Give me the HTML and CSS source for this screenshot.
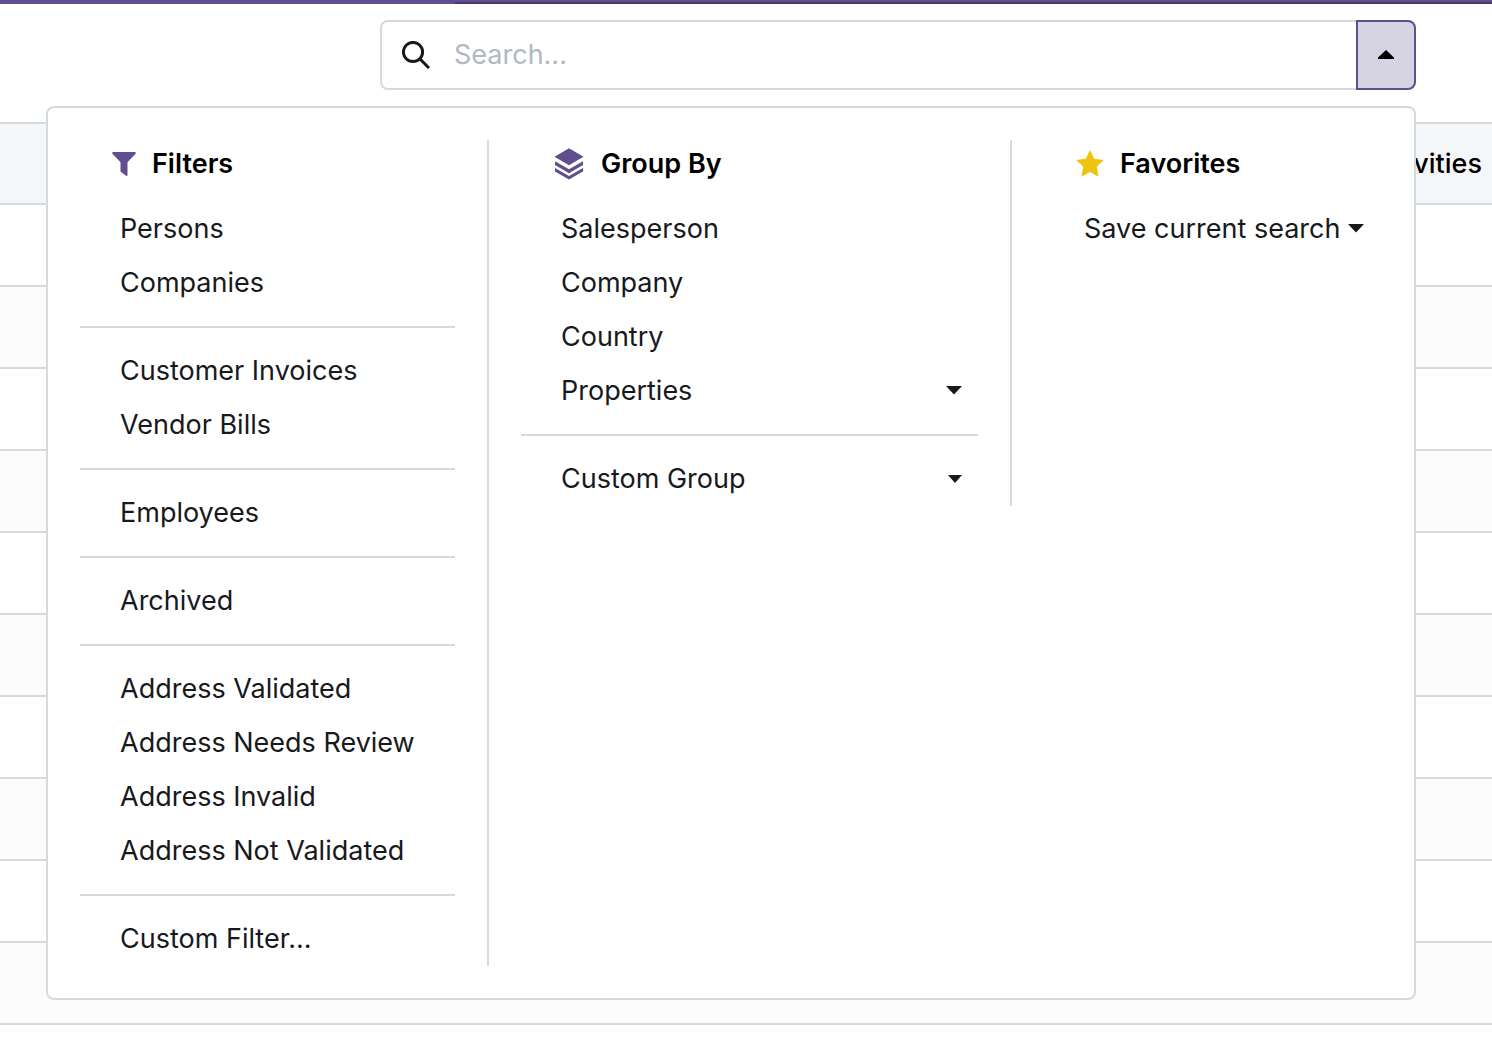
FILE: index.html
```html
<!DOCTYPE html>
<html lang="en">
<head>
<meta charset="utf-8">
<meta name="viewport" content="width=device-width, initial-scale=1">
<title>Contacts</title>
<link rel="stylesheet" href="styles.css">
</head>
<body>
<div class="topbar"><div class="topbar-line"></div></div>
<header class="control-panel">
  <form class="search" role="search">
    <label class="search-label" for="q">
      <svg class="search-icon" viewBox="0 0 28 28" aria-label="Search"><circle cx="11" cy="11" r="9.6"/><path d="M17.8 17.8 27 27"/></svg>
    </label>
    <input class="search-input" id="q" type="text" placeholder="Search...">
    <button class="search-toggle" type="button" aria-label="Toggle search panel" aria-expanded="true">
      <svg class="caret" viewBox="0 0 16 10"><path d="m8 0 8 7.500v1.500H0V7.500z"/></svg>
    </button>
  </form>
  <div class="search-menu">
    <section class="menu-column">
      <h2 class="menu-title">
        <svg class="icon-filter" viewBox="0 0 24 24"><path d="M1 0h22q1.400.500.500 1.800L15.500 10.200V23q-.300 1.400-1.500.700L8.500 19.500V10.200L.500 1.800Q-.400.500 1 0z"/></svg>
        Filters
      </h2>
      <button class="menu-item" type="button">Persons</button>
      <button class="menu-item" type="button">Companies</button>
      <hr class="divider">
      <button class="menu-item" type="button">Customer Invoices</button>
      <button class="menu-item" type="button">Vendor Bills</button>
      <hr class="divider">
      <button class="menu-item" type="button">Employees</button>
      <hr class="divider">
      <button class="menu-item" type="button">Archived</button>
      <hr class="divider">
      <button class="menu-item" type="button">Address Validated</button>
      <button class="menu-item" type="button">Address Needs Review</button>
      <button class="menu-item" type="button">Address Invalid</button>
      <button class="menu-item" type="button">Address Not Validated</button>
      <hr class="divider">
      <button class="menu-item" type="button">Custom Filter...</button>
    </section>
    <section class="menu-column">
      <h2 class="menu-title">
        <svg class="icon-layers" viewBox="0 0 32 32"><path d="M16 .3 30.500 8.800 16 17.300 1.500 8.800z"/><path d="M2 13.200 16 21.300l14-8.100v3.800L16 25.200 2 17z"/><path d="M2 19.900 16 28l14-8.100v3.600L16 31.600 2 23.500z"/></svg>
        Group By
      </h2>
      <button class="menu-item" type="button">Salesperson</button>
      <button class="menu-item" type="button">Company</button>
      <button class="menu-item" type="button">Country</button>
      <button class="menu-item menu-item-spread" type="button">Properties <svg class="caret" viewBox="0 0 16 10"><path d="M0 0h16L8 8.500z"/></svg></button>
      <hr class="divider">
      <button class="menu-item menu-item-spread" type="button">Custom Group <svg class="caret caret-small" viewBox="0 0 14 8"><path d="M0 0h14L7 8z"/></svg></button>
    </section>
    <section class="menu-column">
      <h2 class="menu-title">
        <svg class="icon-star" viewBox="0 0 28 28"><path d="m14 0 4.300 8.800 9.500 1.300-7 6.700 1.800 9.900-8.600-4.700-8.600 4.700 1.800-9.900-7-6.700 9.500-1.300z"/></svg>
        Favorites
      </h2>
      <button class="menu-item" type="button">Save current search <svg class="caret" viewBox="0 0 16 10"><path d="M0 0h16L8 8.500z"/></svg></button>
    </section>
  </div>
</header>
<table class="list">
  <thead><tr><th scope="col">Activities</th></tr></thead>
  <tbody>
    <tr><td></td></tr>
    <tr><td></td></tr>
    <tr><td></td></tr>
    <tr><td></td></tr>
    <tr><td></td></tr>
    <tr><td></td></tr>
    <tr><td></td></tr>
    <tr><td></td></tr>
    <tr><td></td></tr>
    <tr><td></td></tr>
  </tbody>
</table>
</body>
</html>
```

FILE: styles.css
```css
* {
  box-sizing: border-box;
}

:root {
  --purple: #5f4f8e;
  --line: #d5dade;
  --ink: #17191d;
}

body {
  margin: 0;
  background: #fff;
  color: var(--ink);
  font: 27px/54px Inter, "Liberation Sans", sans-serif;
}

button,
input {
  font: inherit;
  color: inherit;
}

svg {
  flex: none;
  fill: currentColor;
}

.topbar {
  display: flex;
  align-items: flex-end;
  height: 4px;
  padding-left: 455px;
  background: var(--purple);
}

.topbar-line {
  flex: 1;
  height: 2px;
  background: #493a6b;
}

.control-panel {
  position: relative;
  padding: 16px 76px 32px 380px;
}

.search {
  display: flex;
  height: 70px;
}

.search-label {
  display: flex;
  align-items: center;
  padding: 0 24px 0 20px;
  border: 2px solid var(--line);
  border-right: 0;
  border-radius: 8px 0 0 8px;
}

.search-icon {
  width: 28px;
  height: 28px;
  fill: none;
  stroke: var(--ink);
  stroke-width: 3;
}

.search-input {
  flex: 1;
  min-width: 0;
  padding: 0;
  border: solid var(--line);
  border-width: 2px 0;
  border-radius: 0;
  outline: 0;
  background: none;
}

.search-input::placeholder {
  color: #b1b8c2;
}

.search-toggle {
  display: flex;
  align-items: center;
  justify-content: center;
  width: 60px;
  padding: 0;
  border: 2px solid var(--purple);
  border-radius: 0 8px 8px 0;
  background: #d6d3e2;
  color: #000;
}

.caret {
  width: 16px;
  height: 10px;
}

.caret-small {
  width: 14px;
  height: 8px;
}

.search-menu {
  position: absolute;
  z-index: 1;
  top: 102px;
  right: 76px;
  left: 46px;
  display: grid;
  grid-template-columns: 409fr 523fr 370fr;
  align-items: start;
  padding: 32px;
  border: 2px solid var(--line);
  border-radius: 8px;
  background: #fff;
}

.menu-column {
  padding-left: 32px;
}

.menu-column:first-child {
  padding-left: 0;
}

.menu-column:not(:last-child) {
  padding-right: 32px;
  border-right: 2px solid var(--line);
}

.menu-title {
  display: flex;
  align-items: center;
  gap: 16px;
  margin: 0 0 14px;
  padding-left: 32px;
  color: #000;
  font-size: 27px;
  font-weight: 600;
  line-height: 48px;
}

.icon-filter {
  width: 24px;
  height: 24px;
  color: var(--purple);
}

.icon-layers {
  width: 32px;
  height: 32px;
  color: var(--purple);
}

.icon-star {
  width: 28px;
  height: 28px;
  color: #f0c30f;
}

.menu-item {
  display: flex;
  align-items: center;
  gap: 8px;
  width: 100%;
  height: 54px;
  padding: 0 16px 0 40px;
  border: 0;
  background: none;
  text-align: left;
  white-space: nowrap;
}

.menu-item-spread {
  justify-content: space-between;
}

.divider {
  height: 2px;
  margin: 16px 0;
  border: 0;
  background: var(--line);
}

.list {
  width: 100%;
  border-collapse: separate;
  border-spacing: 0;
}

.list th {
  height: 83px;
  padding: 0 10px;
  border: solid var(--line);
  border-width: 2px 0;
  background: #f5f6f8;
  color: #000;
  font-weight: 500;
  text-align: right;
}

.list td {
  height: 82px;
  padding: 0;
  border-bottom: 2px solid var(--line);
}

.list tr:nth-child(even) td {
  background: #fcfcfc;
}
```
